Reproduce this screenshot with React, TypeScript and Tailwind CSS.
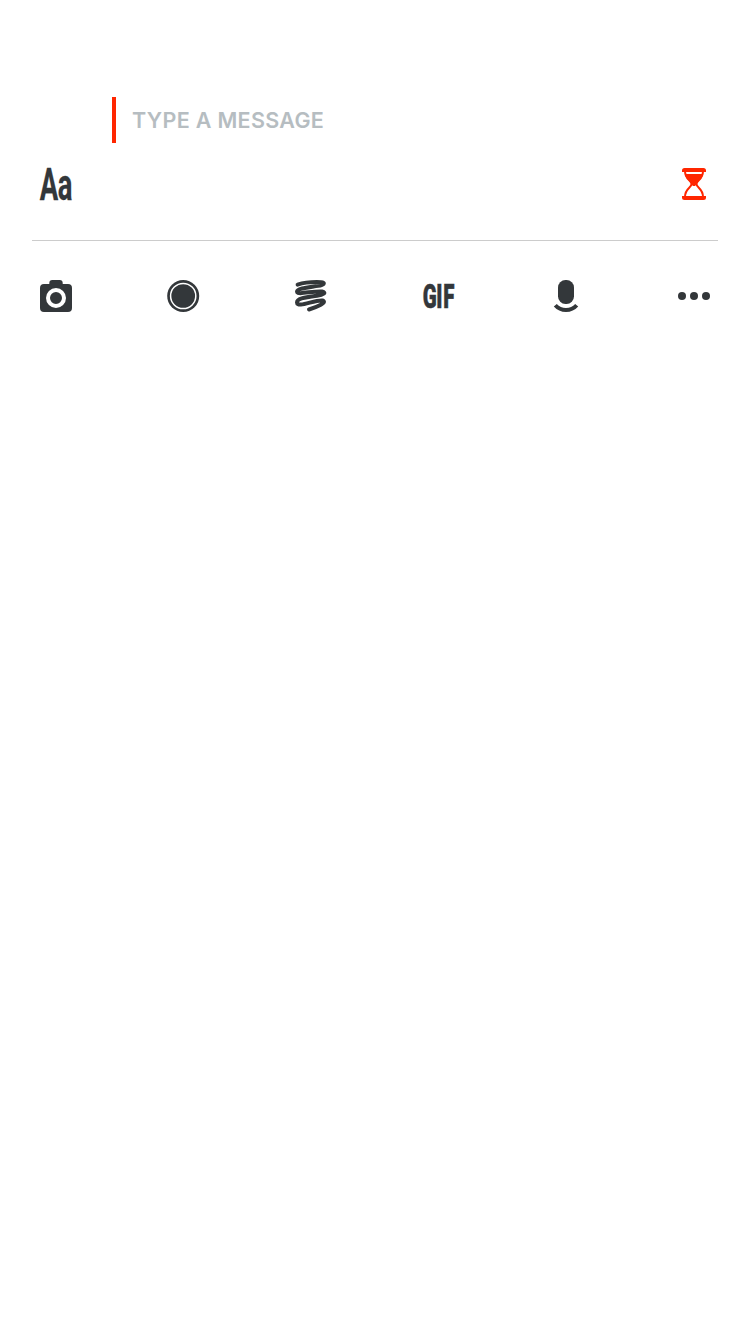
import React from 'react';

const ICON = 'block h-8 w-8 shrink-0 overflow-visible';

function TextIcon() {
  return (
    <svg viewBox="0 0 32 32" className={ICON} fill="#33373a" stroke="#33373a" strokeWidth="0.300">
      <text transform="translate(0 31.800) scale(0.620 1)" fontFamily="Roboto, sans-serif" fontSize="44.300" fontWeight="700">
        <tspan x="-0.400">A</tspan>
        <tspan x="28.700">a</tspan>
      </text>
    </svg>
  );
}

function HourglassIcon() {
  return (
    <svg viewBox="0 0 32 32" className={ICON}>
      <path d="M6.500 0h19q2.500 0 2.500 2.500V4H4V2.500Q4 0 6.500 0ZM4 28h24v1.500q0 2.500-2.500 2.500h-19Q4 32 4 29.500Z" fill="#ff2600" />
      <path
        d="M7 3C7 12 13.500 12 13.500 16S7 20 7 29M25 3C25 12 18.500 12 18.500 16S25 20 25 29"
        fill="none"
        stroke="#ff2600"
        strokeWidth="2"
      />
      <path d="M7 6h18C24.500 12 19 12.500 18.500 16.500L17 18h-2l-1.500-1.500C13 12.500 7.500 12 7 6Z" fill="#ff2600" />
    </svg>
  );
}

function CameraIcon() {
  return (
    <svg viewBox="0 0 32 32" className={ICON}>
      <path d="M4 4h5.300V3q0-3 3-3h7.400q3 0 3 3v1H28q4 0 4 4v20q0 4-4 4H4q-4 0-4-4V8q0-4 4-4Z" fill="#33373a" />
      <circle cx="16" cy="18" r="8" fill="none" stroke="#fff" strokeWidth="4" />
    </svg>
  );
}

function RecordIcon() {
  return (
    <svg viewBox="0.800 0 32 32" className={ICON}>
      <circle cx="16" cy="16" r="16" fill="#33373a" />
      <circle cx="16" cy="16" r="12.600" fill="none" stroke="#fff" strokeWidth="1.500" />
    </svg>
  );
}

function ScribbleIcon() {
  return (
    <svg viewBox="0 0 32 32" className={ICON}>
      <path
        d="M2.600 4.600C8 2.900 18 1.900 26 2.200C31 2.700 29 4.800 23 5.900C16 7.200 2 8 2 11.800C2 15.500 19 10.500 27 11.500C32 12.600 28 14.800 22 15.800C14 17.200 2 17.500 2 22.500C2 28.500 20 19.500 27.500 20.500C33 22.500 22 27 14 29.500"
        fill="none"
        stroke="#33373a"
        strokeWidth="4"
        strokeLinecap="round"
        strokeLinejoin="round"
      />
    </svg>
  );
}

function GifIcon() {
  return (
    <svg viewBox="0 0 32 32" className={ICON} fill="#33373a" stroke="#33373a" strokeWidth="0.600">
      <text transform="translate(-0.300 27.700) scale(0.620 1)" fontFamily="Roboto, sans-serif" fontSize="33" fontWeight="900">
        <tspan x="0">G</tspan>
        <tspan x="22">I</tspan>
        <tspan x="33.200">F</tspan>
      </text>
    </svg>
  );
}

function MicIcon() {
  return (
    <svg viewBox="0 0 32 32" className={ICON}>
      <rect x="8" y="0" width="16" height="24" rx="7.500" fill="#33373a" />
      <path d="M5.300 25.200Q9.500 30 16 30t10.700-4.800" fill="none" stroke="#33373a" strokeWidth="4" />
    </svg>
  );
}

function MoreIcon() {
  return (
    <svg viewBox="0 0 32 32" className={ICON} fill="#33373a">
      <circle cx="4" cy="16" r="4" />
      <circle cx="16" cy="16" r="4" />
      <circle cx="28" cy="16" r="4" />
    </svg>
  );
}

export default function App() {
  return (
    <main className="min-h-screen bg-white pt-[97px] font-['Inter',sans-serif]">
      <div className="ml-28 flex h-[46px] items-center">
        <span className="h-full w-1 bg-[#ff2600]" />
        <span className="ml-4 whitespace-nowrap text-[21.5px] leading-[46px] font-[570] tracking-[0.32px] text-[#b6bdc1]">TYPE A MESSAGE</span>
      </div>
      <div className="mx-10 mt-[25px] flex items-center justify-between">
        <TextIcon />
        <HourglassIcon />
      </div>
      <div className="mx-8 mt-10 h-px bg-[#cccccc]" />
      <div className="mx-10 mt-[39px] flex items-center justify-between">
        <CameraIcon />
        <RecordIcon />
        <ScribbleIcon />
        <GifIcon />
        <MicIcon />
        <MoreIcon />
      </div>
    </main>
  );
}
